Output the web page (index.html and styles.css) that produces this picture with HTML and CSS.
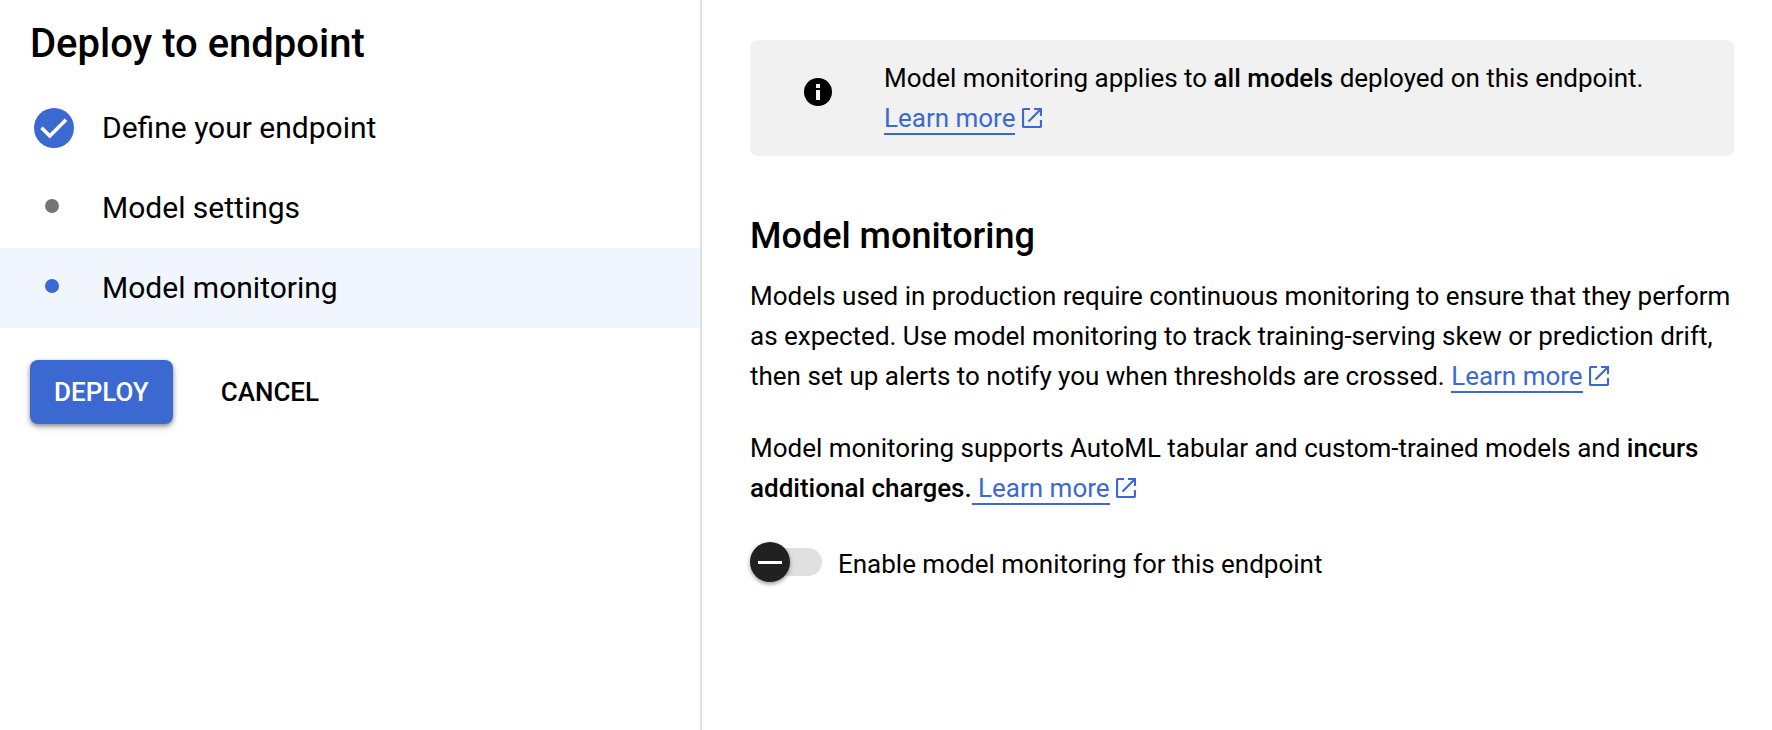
FILE: index.html
```html
<!DOCTYPE html>
<html lang="en">
<head>
<meta charset="utf-8">
<title>Deploy to endpoint</title>
<link rel="stylesheet" href="styles.css">
</head>
<body>
<svg class="defs" width="0" height="0" aria-hidden="true">
  <symbol id="external" viewBox="0 0 20 20">
    <path d="M8 1H2.2Q1 1 1 2.2V17.8Q1 19 2.2 19H17.8Q19 19 19 17.8V12M12 1H19V8M19 1L6.5 13.5" fill="none" stroke="currentColor" stroke-width="2.2"/>
  </symbol>
</svg>
<div class="layout">
  <aside class="sidebar">
    <h1 class="title">Deploy to endpoint</h1>
    <ol class="steps">
      <li class="step">
        <span class="marker"><svg class="check" viewBox="0 0 40 40"><circle cx="20" cy="20" r="20" fill="#3c69d1"/><path d="M7.5 19.7L15.8 28L32 11.8" fill="none" stroke="#fff" stroke-width="3.6"/></svg></span>
        <span class="step-label">Define your endpoint</span>
      </li>
      <li class="step"><span class="marker"><span class="dot"></span></span><span class="step-label">Model settings</span></li>
      <li class="step active"><span class="marker"><span class="dot"></span></span><span class="step-label">Model monitoring</span></li>
    </ol>
    <div class="actions">
      <button class="button primary">DEPLOY</button>
      <button class="button">CANCEL</button>
    </div>
  </aside>
  <main class="content">
    <div class="callout">
      <svg class="info" viewBox="0 0 28 28"><circle cx="14" cy="14" r="14"/><path d="M12 6h4v4h-4zM12 12h4v10h-4z" fill="#f1f1f1"/></svg>
      <p class="text">Model monitoring applies to <b>all models</b> deployed on this endpoint.<br><a class="link" href="#">Learn more</a><svg class="external"><use href="#external"/></svg></p>
    </div>
    <h2 class="heading">Model monitoring</h2>
    <p class="text">Models used in production require continuous monitoring to ensure that they perform<br>as expected. Use model monitoring to track training-serving skew or prediction drift,<br>then set up alerts to notify you when thresholds are crossed. <a class="link" href="#">Learn more</a><svg class="external"><use href="#external"/></svg></p>
    <p class="text second">Model monitoring supports AutoML tabular and custom-trained models and <b>incurs<br>additional charges.</b><a class="link" href="#"> Learn more</a><svg class="external"><use href="#external"/></svg></p>
    <div class="toggle-row">
      <span class="toggle"><span class="thumb"></span></span>
      <span class="text toggle-label">Enable model monitoring for this endpoint</span>
    </div>
  </main>
</div>
</body>
</html>
```

FILE: styles.css
```css
* { box-sizing: border-box; }
body { margin: 0; background: #fff; color: #000; font-family: Roboto, sans-serif; }
h1, h2, p, ol { margin: 0; padding: 0; }
.defs { display: none; }
b { font-weight: 500; }
.layout { display: flex; height: 730px; overflow: hidden; }
.sidebar { width: 702px; flex: none; border-right: 2px solid #e0e0e0; padding-top: 20px; }
.title { padding-left: 30px; height: 68px; font-size: 40px; line-height: 48px; font-weight: 500; white-space: nowrap; }
.steps { list-style: none; }
.step { display: flex; align-items: center; height: 80px; font-size: 30px; padding-left: 34px; }
.step.active { background: #f0f5fe; }
.marker { width: 68px; display: flex; }
.check { width: 40px; height: 40px; }
.dot { width: 14px; height: 14px; border-radius: 50%; background: #757575; margin: 0 0 4px 11px; }
.active .dot { background: #3c69d1; }
.step-label { line-height: 40px; white-space: nowrap; }
.actions { display: flex; gap: 24px; padding: 32px 0 0 30px; }
.button { height: 64px; padding: 0 24px; border: 0; border-radius: 8px; background: none; color: #000; font: 500 26px Roboto, sans-serif; }
.primary { background: #3c69d1; color: #fff; box-shadow: 0 2px 4px rgba(0, 0, 0, .38), 0 3px 8px rgba(0, 0, 0, .14); }
.content { padding: 40px 0 0 48px; }
.callout { display: flex; width: 984px; height: 116px; border-radius: 8px; background: #f1f1f1; padding: 18px 0 0 54px; }
.info { width: 28px; height: 28px; margin: 20px 52px 0 0; flex: none; }
.text { font-size: 26px; line-height: 40px; letter-spacing: -.009px; white-space: nowrap; }
.link { color: #3c69d1; text-decoration: none; border-bottom: 2px solid #3c69d1; }
.external { width: 20px; height: 20px; margin-left: 6.6px; color: #3c69d1; vertical-align: -1px; }
.heading { margin-top: 56px; height: 64px; font-size: 36px; line-height: 48px; font-weight: 500; }
.second { margin-top: 32px; }
.toggle-row { display: flex; margin-top: 34px; }
.toggle { width: 72px; height: 28px; margin: 6px 16px 0 0; border-radius: 14px; background: #e0e0e0; }
.thumb { display: flex; align-items: center; justify-content: center; width: 40px; height: 40px; margin-top: -6px; border-radius: 50%; background: #212121; box-shadow: 0 2px 4px rgba(0, 0, 0, .4); }
.thumb::after { content: ""; width: 24px; height: 3px; background: #fff; }
.toggle-label { margin-top: 2px; }
```
